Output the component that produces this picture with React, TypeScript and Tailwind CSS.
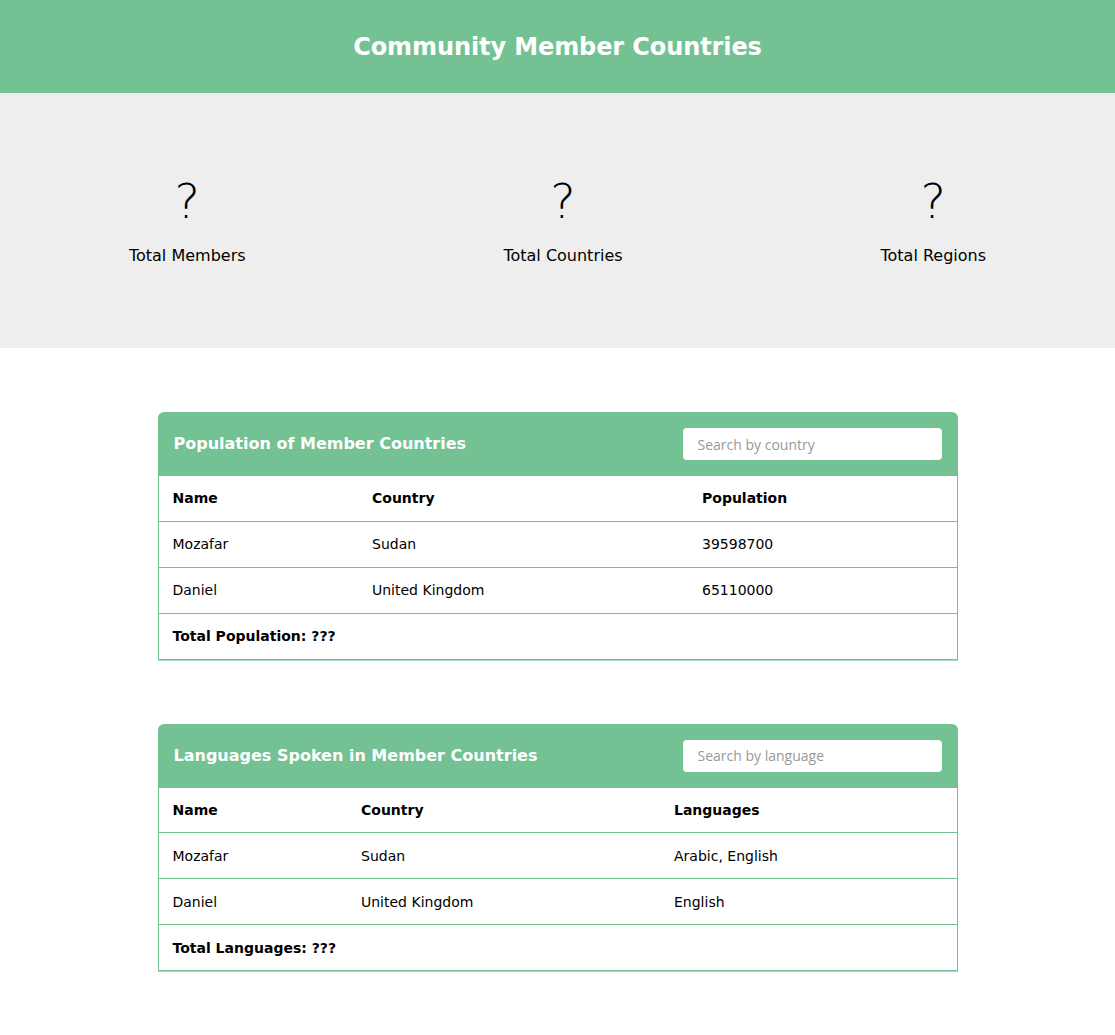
import { type ReactNode } from "react"

const sans = "font-['DejaVu_Sans',sans-serif]"

interface Column {
  label: string
  width?: string
}

interface CardProps {
  title: string
  placeholder: string
  columns: Column[]
  rows: string[][]
  total: string
}

function StatItem({ value, label }: { value: string; label: string }) {
  return (
    <div className="flex flex-col items-center">
      <div className="text-[48px] font-extralight leading-[56px] text-black">{value}</div>
      <div className="mt-[15px] text-base leading-6 text-black">{label}</div>
    </div>
  )
}

function Cell({ children, bold, className = "" }: { children: ReactNode; bold?: boolean; className?: string }) {
  return (
    <td className={`h-[46px] px-[14px] text-left align-middle text-sm ${bold ? "font-bold" : ""} ${className}`}>
      {children}
    </td>
  )
}

function TableCard({ title, placeholder, columns, rows, total }: CardProps) {
  return (
    <section className="w-[800px] shadow-[0_1px_0_#a9dbbd]">
      {/* header bar with search */}
      <div className="flex h-[64px] items-center justify-between rounded-t-md bg-[#74c294] px-4">
        <h2 className="text-base font-bold text-white">{title}</h2>
        <input
          type="text"
          placeholder={placeholder}
          className="h-[32px] w-[259px] rounded-sm bg-white px-[15px] font-['Open_Sans',sans-serif] text-sm text-black outline-none placeholder:text-[#999]"
        />
      </div>
      <table className="w-full table-fixed border-collapse border-x border-b border-[#74c294] text-black">
        <thead>
          <tr className="border-b border-[#74c294]">
            {columns.map((c) => (
              <th key={c.label} className={`h-[45px] px-[14px] text-left text-sm font-bold ${c.width ?? ""}`}>
                {c.label}
              </th>
            ))}
          </tr>
        </thead>
        <tbody>
          {rows.map((r) => (
            <tr key={r[0]} className="border-b border-[#74c294]">
              {r.map((v, i) => (
                <Cell key={i}>{v}</Cell>
              ))}
            </tr>
          ))}
          <tr>
            <Cell bold className="h-[45px]">
              <span className="whitespace-nowrap">{total}</span>
            </Cell>
            <td />
            <td />
          </tr>
        </tbody>
      </table>
    </section>
  )
}

export default function App() {
  return (
    <div className={`min-h-screen bg-white ${sans}`}>
      <header className="flex h-[93px] items-center justify-center bg-[#74c294]">
        <h1 className="text-2xl font-bold tracking-[-0.1px] text-white">Community Member Countries</h1>
      </header>

      <div className="flex h-[255px] items-center justify-around bg-[#eeeeee]">
        <StatItem value="?" label="Total Members" />
        <StatItem value="?" label="Total Countries" />
        <StatItem value="?" label="Total Regions" />
      </div>

      <main className="flex flex-col items-center gap-16 py-16">
        <TableCard
          title="Population of Member Countries"
          placeholder="Search by country"
          columns={[
            { label: "Name", width: "w-[200px]" },
            { label: "Country", width: "w-[330px]" },
            { label: "Population" },
          ]}
          rows={[
            ["Mozafar", "Sudan", "39598700"],
            ["Daniel", "United Kingdom", "65110000"],
          ]}
          total="Total Population: ???"
        />
        <TableCard
          title="Languages Spoken in Member Countries"
          placeholder="Search by language"
          columns={[
            { label: "Name", width: "w-[189px]" },
            { label: "Country", width: "w-[313px]" },
            { label: "Languages" },
          ]}
          rows={[
            ["Mozafar", "Sudan", "Arabic, English"],
            ["Daniel", "United Kingdom", "English"],
          ]}
          total="Total Languages: ???"
        />
      </main>
    </div>
  )
}
